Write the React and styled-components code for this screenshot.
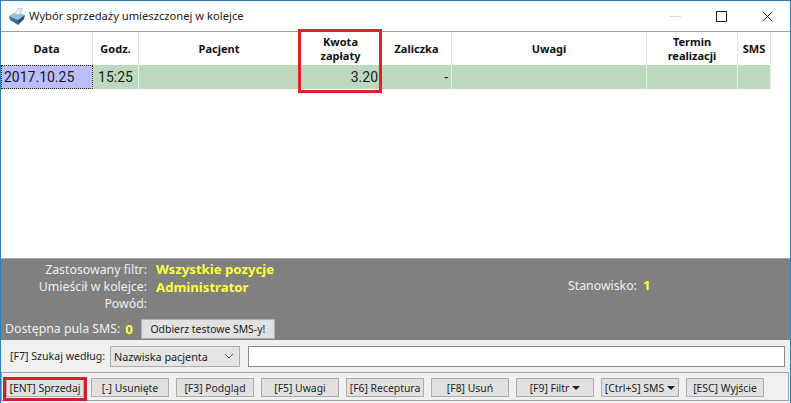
import React from "react";
import styled, { createGlobalStyle } from "styled-components";

const Global = createGlobalStyle`
  html, body { margin: 0; padding: 0; background: #fff; }
  body { font-family: "Noto Sans", "DejaVu Sans", sans-serif; }
`;

const Window = styled.div`
  width: 791px;
  height: 403px;
  box-sizing: border-box;
  border: 1px solid #2b7fbd;
  border-bottom: 0;
  display: flex;
  flex-direction: column;
  background: #f0f0f0;
  overflow: hidden;
`;

const TitleBar = styled.div`
  height: 30px;
  flex: none;
  display: flex;
  align-items: center;
  background: #fff;
  padding-left: 7px;
`;

const TitleText = styled.span`
  font-size: 11.2px;
  color: #222;
  margin: 0 0 2px 3px;
  flex: 1;
`;

const WinButton = styled.div`
  width: 46px;
  height: 30px;
  display: flex;
  align-items: center;
  justify-content: center;
`;

const GridArea = styled.div`
  position: relative;
  height: 227px;
  flex: none;
  box-sizing: border-box;
  background: #fff;
  border-top: 1px solid #a0a0a0;
`;

const Row = styled.div`
  display: grid;
  grid-template-columns: 92px 46px 161px 82px 70px 195px 91px 33px;
  width: 770px;
`;

const HeadCell = styled.div`
  height: 33px;
  box-sizing: border-box;
  border-right: 1px solid #e4e4e4;
  display: flex;
  align-items: center;
  justify-content: center;
  text-align: center;
  font-size: 11px;
  line-height: 13.5px;
  font-weight: 700;
  color: #111;
`;

const Cell = styled.div`
  height: 24px;
  box-sizing: border-box;
  background: ${(p) => (p.$active ? "#bbbdfd" : "#bddabe")};
  border-right: 1px solid #e6f0e6;
  outline: ${(p) => (p.$active ? "1px dotted #222" : "none")};
  outline-offset: -1px;
  display: flex;
  align-items: center;
  justify-content: ${(p) => p.$align || "flex-start"};
  padding: 0 3px;
  font-family: Roboto, sans-serif;
  font-size: 14px;
  color: #1a1a1a;
`;

const Highlight = styled.div`
  position: absolute;
  left: 297px;
  top: -3px;
  width: 84px;
  height: 64px;
  box-sizing: border-box;
  border: 3px solid #e2202c;
  pointer-events: none;
`;

const InfoPanel = styled.div`
  height: 82px;
  flex: none;
  box-sizing: border-box;
  background: #808080;
  border-top: 1px solid #a8a8a8;
  padding: 1px 0 0 4px;
  display: flex;
  flex-direction: column;
  position: relative;
`;

const InfoRow = styled.div`
  display: grid;
  grid-template-columns: 142px auto;
  column-gap: 9px;
  height: 17.5px;
  align-items: center;
`;

const InfoLabel = styled.span`
  text-align: right;
  font-size: 12.3px;
  color: #eee;
`;

const InfoValue = styled.span`
  font-size: 13.2px;
  font-weight: 700;
  color: #ffff40;
`;

const StationLine = styled.div`
  position: absolute;
  left: 567px;
  top: 17px;
  display: flex;
  gap: 6px;
  align-items: center;
`;

const SmsLine = styled.div`
  display: flex;
  align-items: center;
  gap: 5px;
  margin-top: 6px;
`;

const GreyButton = styled.button`
  box-sizing: border-box;
  height: ${(p) => p.$h || 19}px;
  width: ${(p) => p.$w || 78}px;
  padding: 0;
  flex: none;
  margin-left: ${(p) => p.$ml || 0}px;
  background: #e1e1e1;
  border: 1px solid #adadad;
  border-radius: 0;
  font: 10.4px "Noto Sans", sans-serif;
  color: #222;
  display: flex;
  align-items: center;
  justify-content: center;
  gap: 3px;
`;

const SearchRow = styled.div`
  height: 32px;
  flex: none;
  display: flex;
  align-items: center;
  box-sizing: border-box;
  padding: 0 5px 0 9px;
`;

const SearchLabel = styled.span`
  font-size: 10.6px;
  color: #222;
  width: 100px;
`;

const SelectBox = styled.div`
  width: 130px;
  height: 21px;
  box-sizing: border-box;
  background: #e5e5e5;
  border: 1px solid #adadad;
  font-size: 10.8px;
  color: #222;
  display: flex;
  align-items: center;
  justify-content: space-between;
  padding: 0 5px 0 3px;
`;

const SearchInput = styled.div`
  flex: 1;
  height: 21px;
  box-sizing: border-box;
  margin-left: 8px;
  background: #fff;
  border: 1px solid #8a8a8a;
`;

const ButtonBar = styled.div`
  height: 29px;
  flex: none;
  box-sizing: border-box;
  border: 1px solid #a0a0a0;
  margin: 0 1px 0 0;
  display: flex;
  align-items: flex-start;
  padding: 5px 0 0 4px;
  gap: 7px;
`;

const FramedSlot = styled.div`
  position: relative;
  display: flex;
`;

const RedFrame = styled.div`
  position: absolute;
  left: -3px;
  right: -3px;
  top: -1px;
  height: 24px;
  border: 3px solid #d4202c;
  box-sizing: border-box;
  pointer-events: none;
`;

const Caret = styled.span`
  width: 0;
  height: 0;
  border-left: 4px solid transparent;
  border-right: 4px solid transparent;
  border-top: 4px solid #222;
`;

const columns = [
  { label: "Data" },
  { label: "Godz." },
  { label: "Pacjent" },
  { label: <>Kwota<br />zapłaty</> },
  { label: "Zaliczka" },
  { label: "Uwagi" },
  { label: <>Termin<br />realizacji</> },
  { label: "SMS" },
];

const buttons = [
  { label: "[-] Usunięte" },
  { label: "[F3] Podgląd" },
  { label: "[F5] Uwagi" },
  { label: "[F6] Receptura" },
  { label: "[F8] Usuń" },
  { label: "[F9] Filtr", caret: true },
  { label: "[Ctrl+S] SMS", caret: true },
  { label: "[ESC] Wyjście" },
];

const AppIcon = () => (
  <svg width="18" height="18" viewBox="0 0 18 18">
    <polygon points="1,9 8,5 17,8 10,13" fill="#8fbfe0" />
    <polygon points="1,9 10,13 10,18 2,13" fill="#3c6f9e" />
    <polygon points="10,13 17,8 16,12 10,18" fill="#27527c" />
    <polygon points="6,7 11,1 15,2 11,8" fill="#e8eef4" stroke="#7f9fb5" strokeWidth="0.5" />
  </svg>
);

export default function App() {
  return (
    <>
      <Global />
      <Window>
        <TitleBar>
          <AppIcon />
          <TitleText>Wybór sprzedaży umieszczonej w kolejce</TitleText>
          <WinButton>
            <svg width="11" height="11" viewBox="0 0 11 11">
              <path d="M0 5.5H11" stroke="#d8d8d8" />
            </svg>
          </WinButton>
          <WinButton>
            <svg width="11" height="11" viewBox="0 0 11 11">
              <rect x="0.5" y="0.5" width="10" height="10" fill="none" stroke="#222" />
            </svg>
          </WinButton>
          <WinButton>
            <svg width="11" height="11" viewBox="0 0 11 11">
              <path d="M0.5 0.5L10.5 10.5M10.5 0.5L0.5 10.5" stroke="#222" />
            </svg>
          </WinButton>
        </TitleBar>

        <GridArea>
          <Row>
            {columns.map((c, i) => (
              <HeadCell key={i}>{c.label}</HeadCell>
            ))}
          </Row>
          <Row>
            <Cell $active>2017.10.25</Cell>
            <Cell $align="center">15:25</Cell>
            <Cell />
            <Cell $align="flex-end">3.20</Cell>
            <Cell $align="flex-end">-</Cell>
            <Cell />
            <Cell />
            <Cell />
          </Row>
          <Highlight />
        </GridArea>

        <InfoPanel>
          <InfoRow>
            <InfoLabel>Zastosowany filtr:</InfoLabel>
            <InfoValue>Wszystkie pozycje</InfoValue>
          </InfoRow>
          <InfoRow>
            <InfoLabel>Umieścił w kolejce:</InfoLabel>
            <InfoValue>Administrator</InfoValue>
          </InfoRow>
          <InfoRow>
            <InfoLabel>Powód:</InfoLabel>
          </InfoRow>
          <SmsLine>
            <InfoLabel>Dostępna pula SMS:</InfoLabel>
            <InfoValue>0</InfoValue>
            <GreyButton $w={134} $h={20} $ml={3}>Odbierz testowe SMS-y!</GreyButton>
          </SmsLine>
          <StationLine>
            <InfoLabel>Stanowisko:</InfoLabel>
            <InfoValue>1</InfoValue>
          </StationLine>
        </InfoPanel>

        <SearchRow>
          <SearchLabel>[F7] Szukaj według:</SearchLabel>
          <SelectBox>
            Nazwiska pacjenta
            <svg width="10" height="6" viewBox="0 0 10 6">
              <path d="M1 1L5 5L9 1" fill="none" stroke="#555" />
            </svg>
          </SelectBox>
          <SearchInput />
        </SearchRow>

        <ButtonBar>
          <FramedSlot>
            <GreyButton>[ENT] Sprzedaj</GreyButton>
            <RedFrame />
          </FramedSlot>
          {buttons.map((b) => (
            <GreyButton key={b.label}>
              {b.label}
              {b.caret && <Caret />}
            </GreyButton>
          ))}
        </ButtonBar>
      </Window>
    </>
  );
}
